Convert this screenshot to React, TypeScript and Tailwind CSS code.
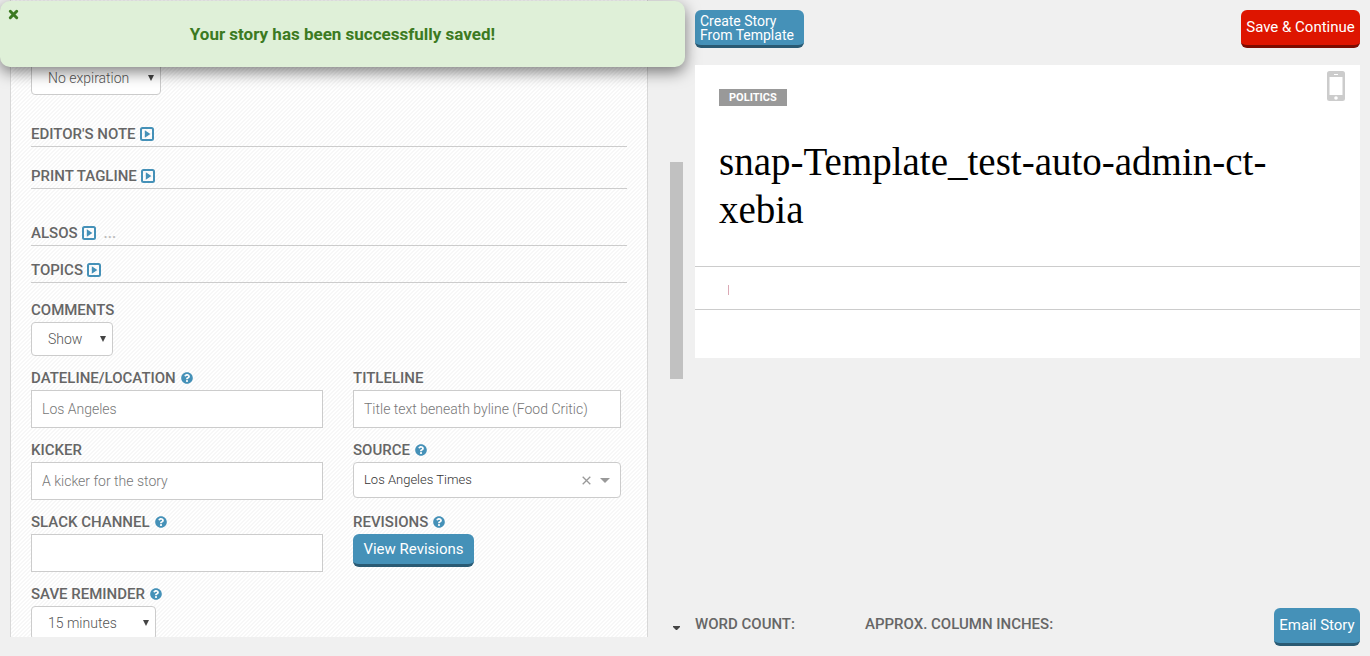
import React, { useState } from "react";
import { FaQuestionCircle } from "react-icons/fa";

const labelText = "text-[15px] leading-5 font-medium text-[#666] uppercase";
const inputBox =
  "h-[38px] w-full border border-[#ccc] bg-white px-2.5 text-sm font-light text-[#555] placeholder:text-[#777] outline-none";
const blueButton =
  "cursor-pointer rounded-md border-b-[3px] border-[#2a5a73] bg-[#4591b8] whitespace-nowrap text-white";

function PlaySquare() {
  return (
    <svg viewBox="0 0 14 14" className="size-3.5 shrink-0" aria-hidden="true">
      <rect x="1" y="1" width="12" height="12" rx="1.5" fill="none" stroke="#4591b8" strokeWidth="2" />
      <path d="M4.800 3.200v7.600L10.400 7z" fill="#4591b8" />
    </svg>
  );
}

function Help({ about }: { about: string }) {
  return (
    <button type="button" aria-label={"Help: " + about} className="cursor-pointer text-[#4591b8]">
      <FaQuestionCircle className="size-3" />
    </button>
  );
}

function Section({ title, note, className }: { title: string; note?: string; className: string }) {
  return (
    <h2 className={"flex h-[23px] items-start border-b border-[#ccc] " + className}>
      <button type="button" className={"flex cursor-pointer items-center gap-1 " + labelText}>
        {title}
        <PlaySquare />
      </button>
      {note && <span className="ml-2 text-[15px] leading-5 font-medium text-[#bbb]">{note}</span>}
    </h2>
  );
}

function Picker({ id, options, width }: { id: string; options: string[]; width: string }) {
  return (
    <div className={"relative " + width}>
      <select
        id={id}
        aria-label={id === "expiration" ? "Expiration" : undefined}
        className="block h-[34px] w-full appearance-none rounded border border-[#ccc] bg-white pr-6 pl-4 text-sm font-light text-[#555] outline-none"
      >
        {options.map((o) => (
          <option key={o}>{o}</option>
        ))}
      </select>
      <svg
        viewBox="0 0 6 6"
        className="pointer-events-none absolute top-3.5 right-[7px] size-1.5"
        aria-hidden="true"
      >
        <path d="M0 0h6L3 6z" fill="#444" />
      </svg>
    </div>
  );
}

function Field({
  id,
  label,
  help,
  children,
}: {
  id: string;
  label: string;
  help?: boolean;
  children: React.ReactNode;
}) {
  return (
    <div>
      <div className="mb-0.5 flex items-center gap-[5px]">
        <label htmlFor={id} className={labelText}>
          {label}
        </label>
        {help && <Help about={label} />}
      </div>
      {children}
    </div>
  );
}

function StoryForm() {
  const [source, setSource] = useState("Los Angeles Times");
  return (
    <form className="min-h-0 flex-1 overflow-hidden border-x border-[#d8d8d8] bg-white bg-[linear-gradient(135deg,#f7f7f7_25%,#fff_25%,#fff_50%,#f7f7f7_50%,#f7f7f7_75%,#fff_75%)] bg-size-[4px_4px] px-5 pt-[61px]">
      <Picker
        id="expiration"
        width="w-[130px]"
        options={["No expiration", "1 day", "1 week"]}
      />
      <Section title="Editor's note" className="mt-[29px]" />
      <Section title="Print tagline" className="mt-[19px]" />
      <Section title="Alsos" note="..." className="mt-[34px]" />
      <Section title="Topics" className="mt-3.5" />

      <div className="mt-[17px]">
        <Field id="comments" label="Comments">
          <Picker id="comments" width="w-[82px]" options={["Show", "Hide"]} />
        </Field>
      </div>

      <div className="mt-3 grid grid-cols-[292fr_268fr] gap-x-[30px] gap-y-3 pr-1.5">
        <Field id="dateline" label="Dateline/Location" help>
          <input id="dateline" className={inputBox} placeholder="Los Angeles" />
        </Field>
        <Field id="titleline" label="Titleline">
          <input
            id="titleline"
            className={inputBox}
            placeholder="Title text beneath byline (Food Critic)"
          />
        </Field>
        <Field id="kicker" label="Kicker">
          <input id="kicker" className={inputBox} placeholder="A kicker for the story" />
        </Field>
        <Field id="source" label="Source" help>
          <div className="flex h-9 items-center rounded border border-[#ccc] bg-white px-2.5">
            <input
              id="source"
              value={source}
              onChange={(e) => setSource(e.target.value)}
              className="min-w-0 flex-1 bg-transparent text-[13px] font-light text-[#333] outline-none"
            />
            <button
              type="button"
              aria-label="Clear source"
              onClick={() => setSource("")}
              className="cursor-pointer"
            >
              <svg viewBox="0 0 9 9" className="size-[9px]" aria-hidden="true">
                <path d="M.7.7l7.6 7.6M8.3.7L.7 8.3" stroke="#999" strokeWidth="1.3" />
              </svg>
            </button>
            <button type="button" aria-label="Show sources" className="ml-[9px] cursor-pointer">
              <svg viewBox="0 0 10 5" className="h-[5px] w-2.5" aria-hidden="true">
                <path d="M0 0h10L5 5z" fill="#999" />
              </svg>
            </button>
          </div>
        </Field>
        <Field id="slack" label="Slack channel" help>
          <input id="slack" className={inputBox} />
        </Field>
        <Field id="revisions" label="Revisions" help>
          <button
            id="revisions"
            type="button"
            className={"h-[33px] w-[121px] text-[15px] " + blueButton}
          >
            View Revisions
          </button>
        </Field>
        <Field id="reminder" label="Save reminder" help>
          <Picker
            id="reminder"
            width="w-[125px]"
            options={["15 minutes", "30 minutes", "60 minutes"]}
          />
        </Field>
      </div>
    </form>
  );
}

function SavedNotice({ onClose }: { onClose: () => void }) {
  return (
    <div
      role="status"
      className="absolute top-px left-0 flex h-[66px] w-full items-center justify-center rounded-[10px] bg-[#dff0d8] shadow-[0_5px_15px_rgba(0,0,0,0.5)]"
    >
      <button
        type="button"
        aria-label="Close"
        onClick={onClose}
        className="absolute top-2 left-2 cursor-pointer"
      >
        <svg viewBox="0 0 11 11" className="size-[11px]" aria-hidden="true">
          <path
            d="M2.300 2.300l6.400 6.400M8.700 2.300L2.300 8.700"
            stroke="#3c7a22"
            strokeWidth="3"
            strokeLinecap="round"
          />
        </svg>
      </button>
      <p className="text-[17px] leading-6 font-bold text-[#3c7a22]">
        Your story has been successfully saved!
      </p>
    </div>
  );
}

function Preview() {
  return (
    <article className="relative bg-white">
      <button
        type="button"
        aria-label="Mobile preview"
        className="absolute top-1.5 right-[15px] cursor-pointer"
      >
        <svg viewBox="0 0 18 30" className="h-[30px] w-[18px]" aria-hidden="true">
          <path
            fillRule="evenodd"
            fill="#ccc"
            d="M2.5 0h13A2.5 2.5 0 0 1 18 2.500v25a2.500 2.500 0 0 1-2.500 2.500h-13A2.500 2.500 0 0 1 0 27.500v-25A2.500 2.500 0 0 1 2.500 0zM2.500 6v18h13V6zM7 3v1h4V3zM9 25.200a1.800 1.800 0 1 0 0 3.600 1.800 1.800 0 0 0 0-3.600z"
          />
        </svg>
      </button>
      <header className="px-6 pt-6 pb-8">
        <p className="w-fit bg-[#999] px-2.5 text-[11px] leading-[17px] font-bold text-white uppercase">
          Politics
        </p>
        <h1 className="mt-8 font-['Liberation_Serif',serif] text-[39px] leading-[48px] text-black">
          snap-Template_test-auto-admin-ct-xebia
        </h1>
      </header>
      <div className="h-11 border-y border-[#ccc] px-[33px] pt-[18px]">
        <div className="h-2.5 w-px bg-[#dba9b5]" />
      </div>
      <div className="h-12" />
    </article>
  );
}

export default function App() {
  const [saved, setSaved] = useState(true);
  return (
    <div className="flex h-screen bg-[#f0f0f0] font-[Roboto,sans-serif]">
      <section className="relative flex w-1/2 flex-none pb-[19px] pl-2.5">
        <StoryForm />
        <div className="ml-[22px] flex w-[15px] flex-none flex-col pb-[7px]">
          <div className="mt-[162px] h-[217px] w-[13px] bg-[#c1c1c1]" />
          <svg viewBox="0 0 7 4" className="mt-auto ml-[3px] h-1 w-[7px]" aria-hidden="true">
            <path d="M0 0h7v1L4 4H3L0 1z" fill="#444" />
          </svg>
        </div>
        {saved && <SavedNotice onClose={() => setSaved(false)} />}
      </section>

      <section className="flex min-w-0 flex-1 flex-col px-2.5 py-2.5">
        <div className="mb-[17px] flex items-start justify-between">
          <button
            type="button"
            className={"h-[38px] w-[109px] pl-[5px] text-left text-sm leading-[14px] " + blueButton}
          >
            Create Story
            <br />
            From Template
          </button>
          <button
            type="button"
            className="h-[38px] w-[119px] cursor-pointer rounded-md border-b-[3px] border-[#7c0b00] bg-[#de1500] text-[15px] whitespace-nowrap text-white"
          >
            Save &amp; Continue
          </button>
        </div>
        <Preview />
        <footer className="mt-auto flex items-start">
          <p className={"mt-1.5 w-[170px] " + labelText}>Word count:</p>
          <p className={"mt-1.5 " + labelText}>Approx. column inches:</p>
          <button type="button" className={"ml-auto h-[38px] w-[86px] text-[15px] " + blueButton}>
            Email Story
          </button>
        </footer>
      </section>
    </div>
  );
}
